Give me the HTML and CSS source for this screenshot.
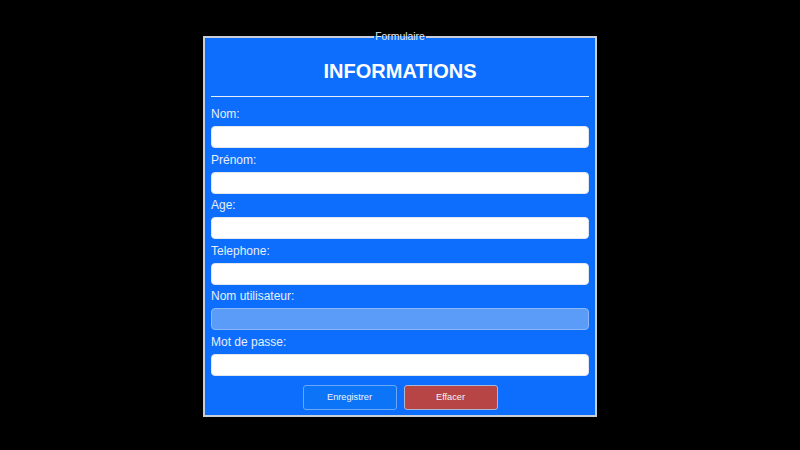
FILE: index.html
```html
<!DOCTYPE html>
<html lang="fr">
<head>
<meta charset="utf-8">
<title>Formulaire</title>
<link rel="stylesheet" href="styles.css">
</head>
<body>
<form class="form">
  <fieldset class="box">
    <legend class="legend">Formulaire</legend>
    <h1 class="title">INFORMATIONS</h1>
    <hr class="rule">
    <label class="label" for="nom">Nom:</label>
    <input class="field" id="nom" type="text">
    <label class="label" for="prenom">Prénom:</label>
    <input class="field" id="prenom" type="text">
    <label class="label" for="age">Age:</label>
    <input class="field" id="age" type="text">
    <label class="label" for="tel">Telephone:</label>
    <input class="field" id="tel" type="text">
    <label class="label" for="user">Nom utilisateur:</label>
    <input class="field field-muted" id="user" type="text">
    <label class="label" for="pass">Mot de passe:</label>
    <input class="field" id="pass" type="password">
    <div class="actions">
      <button class="btn btn-save" type="button">Enregistrer</button>
      <button class="btn btn-clear" type="reset">Effacer</button>
    </div>
  </fieldset>
</form>
</body>
</html>
```
FILE: styles.css
```css
html, body {
  margin: 0;
  padding: 0;
  background: #000;
  font-family: "Liberation Sans", Arial, sans-serif;
}
body {
  display: flex;
  justify-content: center;
  padding-top: 31px;
}
.form {
  width: 394px;
}
.box {
  margin: 0;
  box-sizing: border-box;
  width: 394px;
  height: 386px;
  border: 2px solid #c9cfd8;
  background: #0d6efd;
  padding: 0 6px;
  display: flex;
  flex-direction: column;
}
.legend {
  margin: 0 auto;
  padding: 0 1px;
  font-size: 10.4px;
  color: #e6ecf5;
  line-height: 12px;
}
.title {
  margin: 16px 0 0;
  text-align: center;
  color: #fff;
  font-size: 20px;
  font-weight: bold;
  line-height: 24px;
}
.rule {
  margin: 13px 0 0;
  border: 0;
  height: 1px;
  background: #e8eef8;
}
.label {
  display: block;
  margin-top: 10px;
  font-size: 12px;
  line-height: 14px;
  color: #e8eef8;
}
.field {
  display: block;
  box-sizing: border-box;
  width: 100%;
  height: 22px;
  margin-top: 5px;
  border: 1px solid #dfe6f0;
  border-radius: 4px;
  background: #fff;
}
.field + .label {
  margin-top: 4.6px;
}
.field-muted {
  background: #5a9cf7;
  border-color: #8ab8f8;
}
.actions {
  display: flex;
  justify-content: center;
  gap: 7px;
  margin-top: 9px;
}
.btn {
  width: 94px;
  height: 25px;
  border-radius: 3px;
  font-family: "Liberation Sans", Arial, sans-serif;
  font-size: 9.2px;
  color: #eef3fb;
  cursor: pointer;
}
.btn-save {
  background: #0b74f7;
  border: 1px solid #6aa8f5;
}
.btn-clear {
  background: #b84545;
  border: 1px solid #a9b7d6;
}
```
